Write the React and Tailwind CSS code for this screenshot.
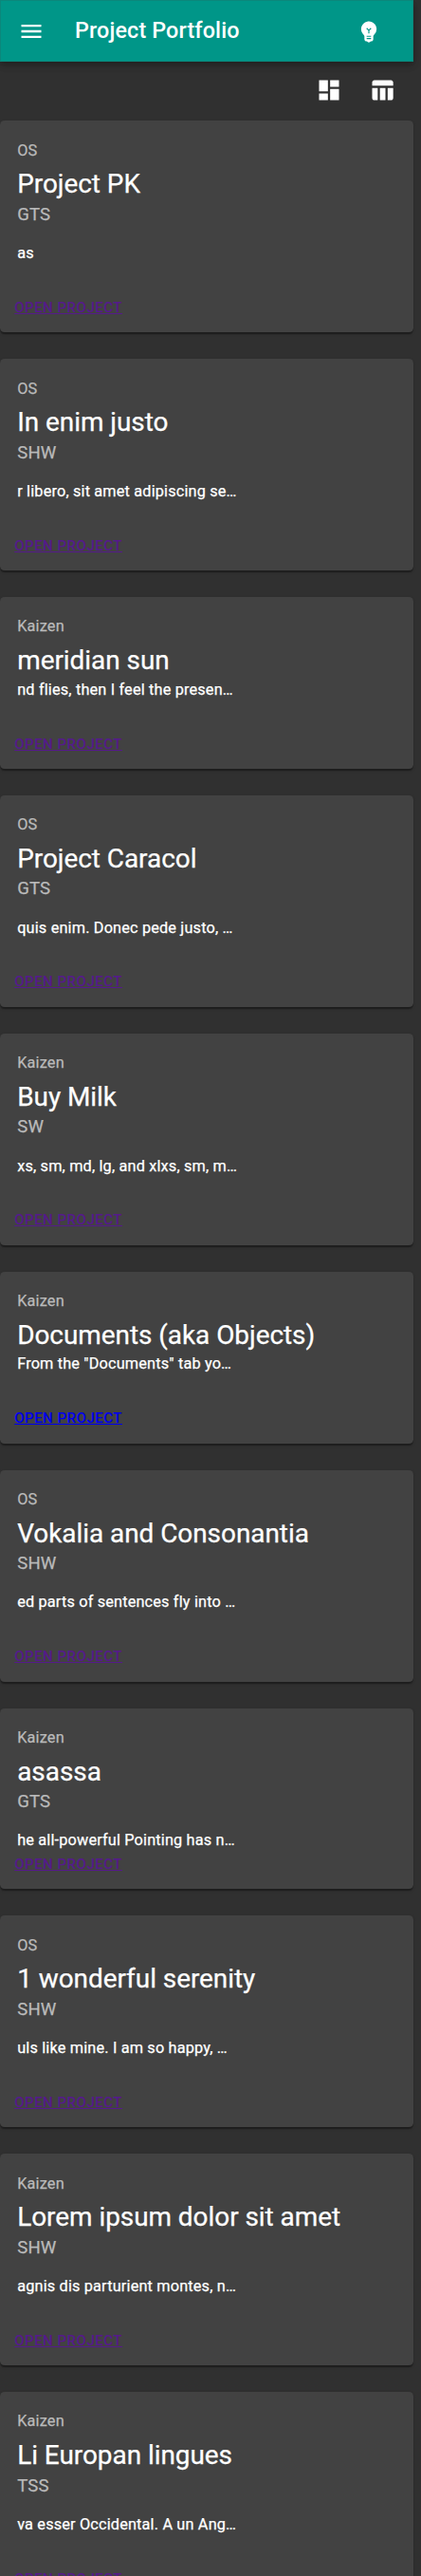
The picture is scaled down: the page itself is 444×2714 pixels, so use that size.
import React from "react";
import { MdMenu, MdEmojiObjects, MdDashboard, MdTableChart } from "react-icons/md";

const projects = [
  { type: "OS", title: "Project PK", team: "GTS", text: "as" },
  { type: "OS", title: "In enim justo", team: "SHW", text: "r libero, sit amet adipiscing se…" },
  { type: "Kaizen", title: "meridian sun", text: "nd flies, then I feel the presen…" },
  { type: "OS", title: "Project Caracol", team: "GTS", text: "quis enim. Donec pede justo, …" },
  { type: "Kaizen", title: "Buy Milk", team: "SW", text: "xs, sm, md, lg, and xlxs, sm, m…" },
  { type: "Kaizen", title: "Documents (aka Objects)", text: "From the \"Documents\" tab yo…", unvisited: true },
  { type: "OS", title: "Vokalia and Consonantia", team: "SHW", text: "ed parts of sentences fly into …" },
  { type: "Kaizen", title: "asassa", team: "GTS", text: "he all-powerful Pointing has n…", compact: true },
  { type: "OS", title: "1 wonderful serenity", team: "SHW", text: "uls like mine. I am so happy, …" },
  { type: "Kaizen", title: "Lorem ipsum dolor sit amet", team: "SHW", text: "agnis dis parturient montes, n…" },
  { type: "Kaizen", title: "Li Europan lingues", team: "TSS", text: "va esser Occidental. A un Ang…" },
];

function ProjectCard({ project }) {
  return (
    <article className="shrink-0 rounded-[4.67px] bg-[#424242] text-white shadow-[0_2.3px_1.2px_-1.2px_rgba(0,0,0,0.2),0_1.2px_1.2px_rgba(0,0,0,0.14),0_1.2px_3.5px_rgba(0,0,0,0.12)]">
      <div className="px-[18.2px] pt-[19.3px] pb-[7.9px] [-webkit-text-stroke-width:0.25px]">
        <p className="h-[28.75px] text-[16.3px] leading-[23.35px] tracking-[0.17px] text-[#bababa]">{project.type}</p>
        <h2 className="h-[37.35px] text-[27.95px] leading-[37.35px] tracking-[-0.04px]">{project.title}</h2>
        {project.team && (
          <p className="h-[42.1px] text-[18.6px] leading-[27.6px] tracking-[0.15px] text-[#bababa]">{project.team}</p>
        )}
        <p className="mt-[0.2px] text-[16.28px] leading-[23.35px] tracking-[0.17px]">{project.text}</p>
      </div>
      <div className={`flex items-end overflow-hidden px-[15.2px] pb-[13px] ${project.compact ? "h-[31.9px]" : "h-[64px]"}`}>
        <a
          href="#"
          className={`text-[15.17px] leading-[26.5px] font-medium tracking-[0.42px] underline ${project.unvisited ? "text-[#0000ee]" : "text-[#551a8b]"}`}
        >
          OPEN PROJECT
        </a>
      </div>
    </article>
  );
}

export default function App() {
  return (
    <div className="h-[2714px] w-[444px] overflow-hidden bg-[#303030] font-[Roboto,sans-serif]">
      <div className="w-[435.6px]">
        <header className="flex h-[65.2px] items-center border border-[#0b877b] bg-[#009688] pr-[31.3px] pl-[17.67px] text-white shadow-[0_2.3px_4.7px_-1.2px_rgba(0,0,0,0.2),0_4.7px_5.8px_rgba(0,0,0,0.14),0_1.2px_11.7px_rgba(0,0,0,0.12)]">
          <MdMenu className="size-7" />
          <h1 className="ml-[32.3px] flex-1 text-[23.33px] leading-[37.3px] font-medium tracking-[0.14px]">Project Portfolio</h1>
          <MdEmojiObjects className="size-7" />
        </header>
        <div className="flex h-[62.2px] items-center justify-end gap-7 pr-[18.6px] pb-[2px] text-white">
          <MdDashboard className="size-7" />
          <MdTableChart className="size-7" />
        </div>
        <main className="flex flex-col gap-7">
          {projects.map((p) => (
            <ProjectCard key={p.title} project={p} />
          ))}
        </main>
      </div>
    </div>
  );
}
